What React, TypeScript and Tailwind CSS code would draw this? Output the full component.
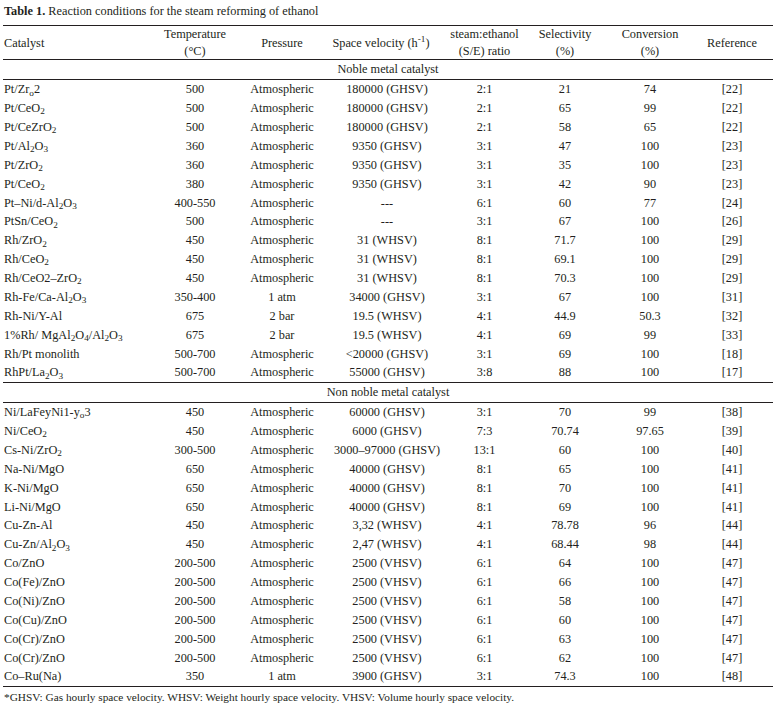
import type { ReactNode } from "react";

type Row = [ReactNode, string, string, string, string, string, string, string];

const s = (t: string) => <sub>{t}</sub>;

const NOBLE: Row[] = [
  [<>Pt/Zr{s("o")}2</>, "500", "Atmospheric", "180000 (GHSV)", "2:1", "21", "74", "[22]"],
  [<>Pt/CeO{s("2")}</>, "500", "Atmospheric", "180000 (GHSV)", "2:1", "65", "99", "[22]"],
  [<>Pt/CeZrO{s("2")}</>, "500", "Atmospheric", "180000 (GHSV)", "2:1", "58", "65", "[22]"],
  [<>Pt/Al{s("2")}O{s("3")}</>, "360", "Atmospheric", "9350 (GHSV)", "3:1", "47", "100", "[23]"],
  [<>Pt/ZrO{s("2")}</>, "360", "Atmospheric", "9350 (GHSV)", "3:1", "35", "100", "[23]"],
  [<>Pt/CeO{s("2")}</>, "380", "Atmospheric", "9350 (GHSV)", "3:1", "42", "90", "[23]"],
  [<>Pt–Ni/d-Al{s("2")}O{s("3")}</>, "400-550", "Atmospheric", "---", "6:1", "60", "77", "[24]"],
  [<>PtSn/CeO{s("2")}</>, "500", "Atmospheric", "---", "3:1", "67", "100", "[26]"],
  [<>Rh/ZrO{s("2")}</>, "450", "Atmospheric", "31 (WHSV)", "8:1", "71.7", "100", "[29]"],
  [<>Rh/CeO{s("2")}</>, "450", "Atmospheric", "31 (WHSV)", "8:1", "69.1", "100", "[29]"],
  [<>Rh/CeO2–ZrO{s("2")}</>, "450", "Atmospheric", "31 (WHSV)", "8:1", "70.3", "100", "[29]"],
  [<>Rh-Fe/Ca-Al{s("2")}O{s("3")}</>, "350-400", "1 atm", "34000 (GHSV)", "3:1", "67", "100", "[31]"],
  ["Rh-Ni/Y-Al", "675", "2 bar", "19.5 (WHSV)", "4:1", "44.9", "50.3", "[32]"],
  [<>1%Rh/ MgAl{s("2")}O{s("4")}/Al{s("2")}O{s("3")}</>, "675", "2 bar", "19.5 (WHSV)", "4:1", "69", "99", "[33]"],
  ["Rh/Pt monolith", "500-700", "Atmospheric", "<20000 (GHSV)", "3:1", "69", "100", "[18]"],
  [<>RhPt/La{s("2")}O{s("3")}</>, "500-700", "Atmospheric", "55000 (GHSV)", "3:8", "88", "100", "[17]"],
];

const NON_NOBLE: Row[] = [
  [<>Ni/LaFeyNi1-y{s("o")}3</>, "450", "Atmospheric", "60000 (GHSV)", "3:1", "70", "99", "[38]"],
  [<>Ni/CeO{s("2")}</>, "450", "Atmospheric", "6000 (GHSV)", "7:3", "70.74", "97.65", "[39]"],
  [<>Cs-Ni/ZrO{s("2")}</>, "300-500", "Atmospheric", "3000–97000 (GHSV)", "13:1", "60", "100", "[40]"],
  ["Na-Ni/MgO", "650", "Atmospheric", "40000 (GHSV)", "8:1", "65", "100", "[41]"],
  ["K-Ni/MgO", "650", "Atmospheric", "40000 (GHSV)", "8:1", "70", "100", "[41]"],
  ["Li-Ni/MgO", "650", "Atmospheric", "40000 (GHSV)", "8:1", "69", "100", "[41]"],
  ["Cu-Zn-Al", "450", "Atmospheric", "3,32 (WHSV)", "4:1", "78.78", "96", "[44]"],
  [<>Cu-Zn/Al{s("2")}O{s("3")}</>, "450", "Atmospheric", "2,47 (WHSV)", "4:1", "68.44", "98", "[44]"],
  ["Co/ZnO", "200-500", "Atmospheric", "2500 (VHSV)", "6:1", "64", "100", "[47]"],
  ["Co(Fe)/ZnO", "200-500", "Atmospheric", "2500 (VHSV)", "6:1", "66", "100", "[47]"],
  ["Co(Ni)/ZnO", "200-500", "Atmospheric", "2500 (VHSV)", "6:1", "58", "100", "[47]"],
  ["Co(Cu)/ZnO", "200-500", "Atmospheric", "2500 (VHSV)", "6:1", "60", "100", "[47]"],
  ["Co(Cr)/ZnO", "200-500", "Atmospheric", "2500 (VHSV)", "6:1", "63", "100", "[47]"],
  ["Co(Cr)/ZnO", "200-500", "Atmospheric", "2500 (VHSV)", "6:1", "62", "100", "[47]"],
  ["Co–Ru(Na)", "350", "1 atm", "3900 (GHSV)", "3:1", "74.3", "100", "[48]"],
];

const COLS = "grid grid-cols-[152px_80px_94px_116px_79px_82px_88px_79px] items-center";

function Rule() {
  return <div className="h-px bg-[#231f20]" />;
}

function DataRow({ r }: { r: Row }) {
  return (
    <div className={`${COLS} h-[18.875px]`}>
      <div className="pl-[1px] whitespace-nowrap">{r[0]}</div>
      {r.slice(1, 7).map((c, i) => (
        <div key={i} className="text-center whitespace-nowrap">
          {c as string}
        </div>
      ))}
      <div className="pr-[3px] text-center">{r[7]}</div>
    </div>
  );
}

function Section({ title }: { title: string }) {
  return <div className="flex h-[18.875px] items-center justify-center">{title}</div>;
}

export default function App() {
  return (
    <div className="h-[708px] w-[778px] overflow-hidden bg-white font-['Liberation_Serif',serif] text-[12.3px] text-[#231f20]">
      <div className="pl-[4px] pt-[4px] leading-[14px]">
        <span className="font-bold">Table 1.</span> Reaction conditions for the steam reforming of ethanol
      </div>

      <div className="ml-[3px] mt-[7px] w-[770px] leading-[14px]">
        <Rule />
        <div className={`${COLS} h-[33px] leading-[17px]`}>
          <div className="pl-[1px]">Catalyst</div>
          <div className="text-center">
            Temperature
            <br />
            (°C)
          </div>
          <div className="text-center">Pressure</div>
          <div className="whitespace-nowrap pr-[12px] text-center">
            Space velocity (h<sup>-1</sup>)
          </div>
          <div className="text-center">
            steam:ethanol
            <br />
            (S/E) ratio
          </div>
          <div className="text-center">
            Selectivity
            <br />
            (%)
          </div>
          <div className="text-center">
            Conversion
            <br />
            (%)
          </div>
          <div className="pr-[3px] text-center">Reference</div>
        </div>
        <Rule />
        <Section title="Noble metal catalyst" />
        <Rule />
        {NOBLE.map((r, i) => (
          <DataRow key={i} r={r} />
        ))}
        <Rule />
        <Section title="Non noble metal catalyst" />
        <Rule />
        {NON_NOBLE.map((r, i) => (
          <DataRow key={i} r={r} />
        ))}
        <Rule />
      </div>

      <div className="mt-[3px] pl-[4px] text-[11.3px] leading-[14px]">
        *GHSV: Gas hourly space velocity. WHSV: Weight hourly space velocity. VHSV: Volume hourly space velocity.
      </div>
    </div>
  );
}
